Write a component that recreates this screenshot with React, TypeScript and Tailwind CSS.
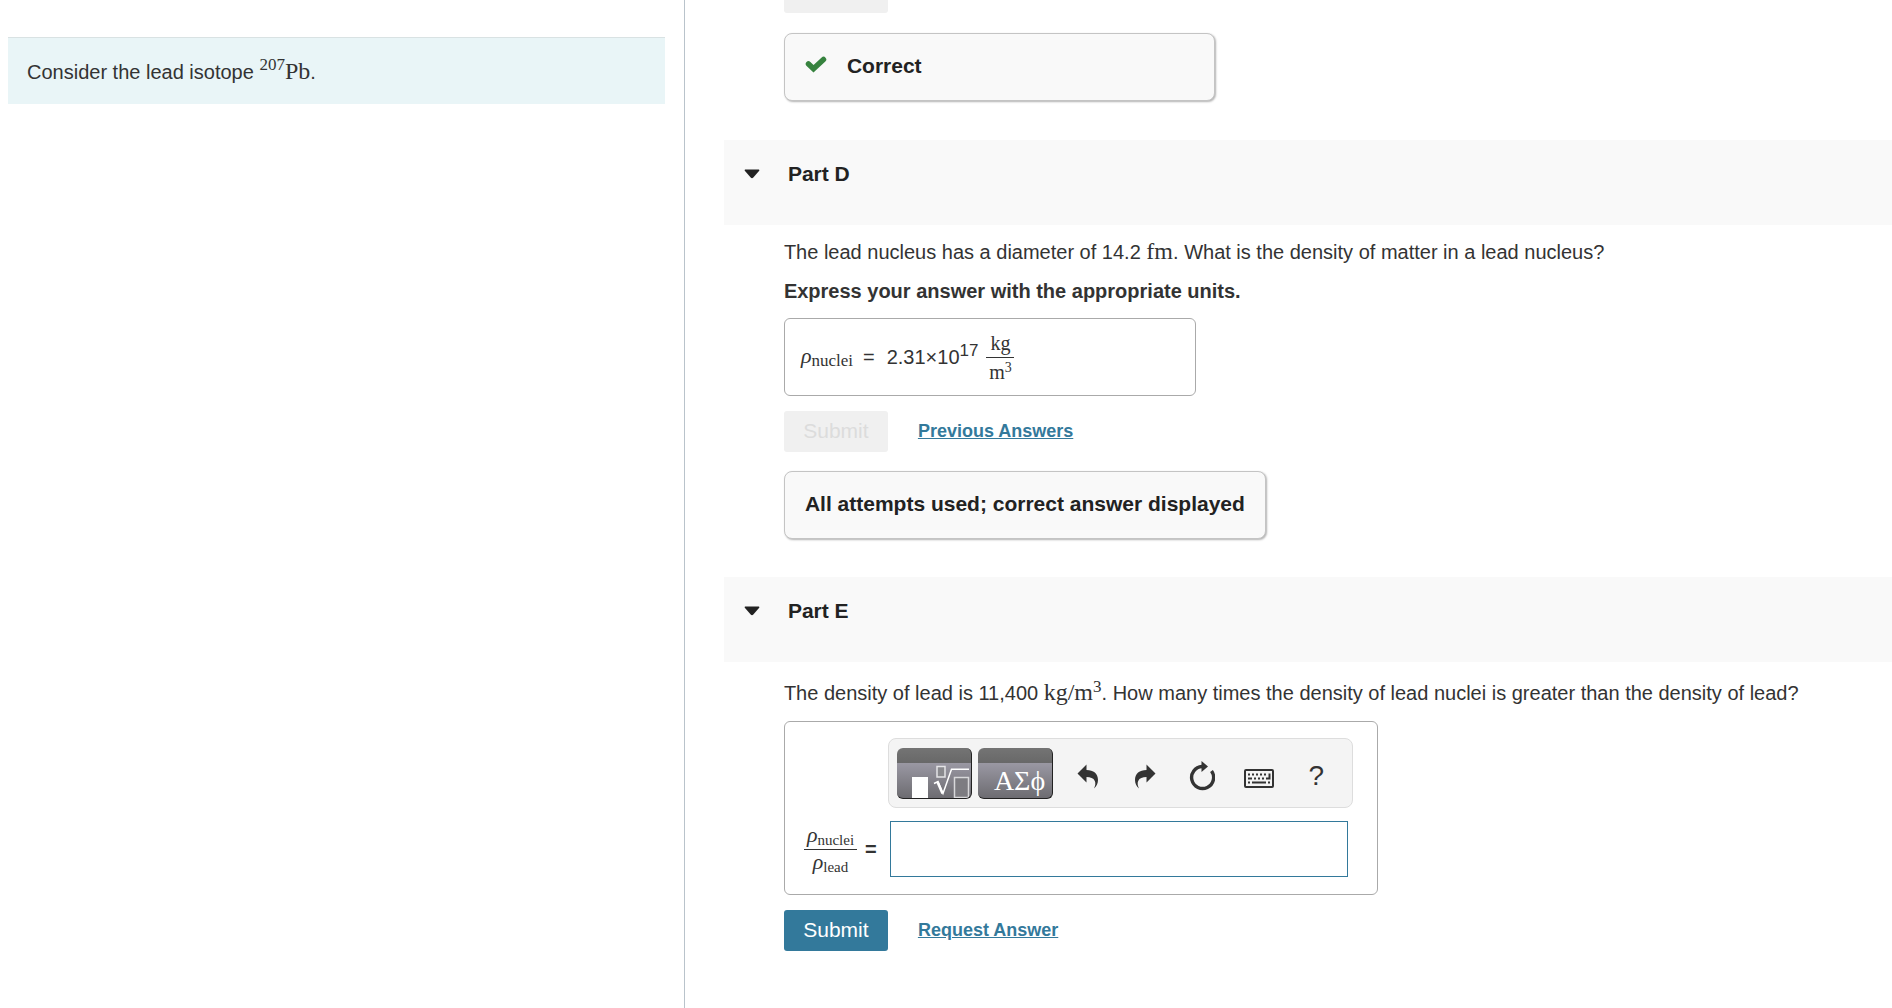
import type { ReactNode } from 'react';

const SERIF = "font-['Liberation_Serif',serif]";

function PartHeader({ title }: { title: string }) {
  return (
    <h2 className="bg-[#f9f9f9] pt-5 pb-[37px] pl-5 text-[21px] leading-7 font-bold text-[#222]">
      <button type="button" aria-expanded="true" className="flex items-center gap-7">
        <svg width="16" height="10" viewBox="0 0 16 10" fill="#222" aria-hidden="true">
          <path d="M1.200 .5h13.600q1 .3.400 1.200L9.300 8.600q-1.300 1.200-2.600 0L.8 1.700q-.6-.9.4-1.200z" />
        </svg>
        {title}
      </button>
    </h2>
  );
}

function Feedback({ children, className }: { children: ReactNode; className: string }) {
  return (
    <div
      className={`${className} flex max-w-full items-start rounded-lg border border-[#c4c4c4] bg-[#f9f9f9] pt-[18px] pb-5 pl-5 text-[21px] leading-7 font-bold text-[#222] shadow-[1px_1px_2px_rgba(0,0,0,0.3)]`}
    >
      {children}
    </div>
  );
}

function SubmitButton({ disabled = false }: { disabled?: boolean }) {
  return (
    <button
      type="button"
      disabled={disabled}
      className="h-[41px] w-[104px] rounded-[3px] bg-[#33799b] pb-[2px] text-[21px] leading-7 text-white disabled:bg-[#f0f0f0] disabled:text-[#dcdcdc]"
    >
      Submit
    </button>
  );
}

function AnswerLink({ children }: { children: ReactNode }) {
  return (
    <a href="#" className="pb-[2px] text-[18px] leading-6 font-bold text-[#33799b] underline">
      {children}
    </a>
  );
}

function Rho({ sub, className }: { sub: string; className: string }) {
  return (
    <span className={`${SERIF} whitespace-nowrap`}>
      <i className="text-[22px]">ρ</i>
      <span className={`${className} relative top-[3px]`}>{sub}</span>
    </span>
  );
}

function ToolButton({ label, children }: { label: string; children: ReactNode }) {
  return (
    <button type="button" aria-label={label} className="flex h-[51px] w-[57px] items-center justify-center pt-[6px] pl-[2px] text-[#333]">
      {children}
    </button>
  );
}

function TemplatesIcon() {
  return (
    <svg width="75" height="51" viewBox="0 0 75 51" fill="none" aria-hidden="true">
      <rect x="15" y="29" width="16" height="21" fill="#fff" />
      <rect x="40" y="18.500" width="8" height="10.500" fill="#8a8a8e" stroke="#e4e4e6" strokeWidth="1.500" />
      <rect x="57.500" y="29.500" width="14" height="20" fill="#7d7c81" stroke="#d8d8da" strokeWidth="1.500" />
      <path d="M37 35.500l4-2 5 12 8.500-24.300H72" stroke="#fff" strokeWidth="1.500" />
      <path d="M40.500 34l5 11.500" stroke="#fff" strokeWidth="2.500" />
    </svg>
  );
}

function ArrowIcon({ flipped = false }: { flipped?: boolean }) {
  return (
    <svg width="22" height="25" viewBox="0 0 22 25" fill="currentColor" className={flipped ? '-scale-x-100' : ''} aria-hidden="true">
      <path d="M.5 9.500L9.500.5v5.500c7 0 11.500 3.500 11.500 10 0 3.500-1.500 6.500-4 8.500 1.500-3 1.700-5.500.8-7.500-1.300-3-4.300-4-8.300-4v5.500z" />
    </svg>
  );
}

function ResetIcon() {
  return (
    <svg width="26" height="30" viewBox="0 0 26 30" aria-hidden="true">
      <path d="M14 5.500h-1A11 11 0 1 0 22.500 10" fill="none" stroke="currentColor" strokeWidth="3.400" />
      <path d="M12.500 0L19 5.500 12.500 11z" fill="currentColor" />
    </svg>
  );
}

function KeyboardIcon() {
  return (
    <svg width="30" height="19" viewBox="0 0 30 19" fill="none" stroke="currentColor" className="mt-1" aria-hidden="true">
      <rect x="1" y="1" width="28" height="17" rx="1" strokeWidth="2" />
      <path d="M4 5.500h20M4 13.500h2.500M24 13.500h2.500" strokeWidth="2" strokeDasharray="2 2" />
      <path d="M4 9.500h4M10 9.500h2M14 9.500h2M18 9.500h2M22 9.500h4M25.500 4.500v6M8 13.500h14" strokeWidth="2" />
    </svg>
  );
}

const keyClass =
  'h-[51px] w-[75px] overflow-hidden rounded-md border-r border-b border-[#222] bg-[linear-gradient(#747474,#686868_15px,#9a98a3_15px,#6d6c71)]';

function MathToolbar() {
  return (
    <div className="col-start-2 flex h-[70px] items-center rounded-lg border border-[#ddd] bg-[#f4f4f4] px-2">
      <button type="button" aria-label="Templates" className={keyClass}>
        <TemplatesIcon />
      </button>
      <button type="button" aria-label="Symbols" className={`${keyClass} ${SERIF} mx-[6px] pt-4 pl-4 text-left text-[28px] leading-8 text-white`}>
        ΑΣϕ
      </button>
      <ToolButton label="Undo"><ArrowIcon /></ToolButton>
      <ToolButton label="Redo"><ArrowIcon flipped /></ToolButton>
      <ToolButton label="Reset"><ResetIcon /></ToolButton>
      <ToolButton label="Keyboard shortcuts"><KeyboardIcon /></ToolButton>
      <ToolButton label="Help"><span className="text-[28px] leading-8">?</span></ToolButton>
    </div>
  );
}

export default function App() {
  return (
    <div className="grid h-screen grid-cols-[36.2%_1fr] overflow-hidden bg-white font-['Liberation_Sans',Arial,sans-serif] text-[20px] leading-7 text-[#333]">
      <aside className="border-r border-[#b9c3cb] pt-[37px] pr-[19px] pl-2">
        <p className="flex h-[67px] items-center border-t border-[#d9e2e3] bg-[#e9f5f7] pl-[19px]">
          <span>
            Consider the lead isotope{' '}
            <span className={`${SERIF} text-[24px]`}>
              <sup className="text-[17px]">207</sup>Pb
            </span>
            .
          </span>
        </p>
      </aside>

      <main className="-mt-7 pl-[39px]">
        <section className="pl-[60px]">
          <SubmitButton disabled />
          <Feedback className="mt-5 w-[431px]">
            <svg width="22" height="17" viewBox="0 0 22 17" fill="none" className="mt-1 mr-5" aria-hidden="true">
              <path d="M3.500 8l5 4.700L18.500 3.500" stroke="#37833f" strokeWidth="5.500" strokeLinecap="round" />
            </svg>
            Correct
          </Feedback>
        </section>

        <section className="mt-[39px]">
          <PartHeader title="Part D" />
          <div className="pt-[10px] pl-[60px]">
            <p className="leading-8">
              The lead nucleus has a diameter of 14.2 <span className={`${SERIF} text-[24px]`}>fm</span>. What is the
              density of matter in a lead nucleus?
            </p>
            <p className="mt-[9px] font-bold">Express your answer with the appropriate units.</p>
            <div className="mt-[13px] flex h-[78px] w-[412px] max-w-full items-center rounded-md border border-[#aaa] pl-4">
              <Rho sub="nuclei" className="text-[17px]" />
              <span className="mr-3 ml-[10px]">=</span>
              <span>
                2.31×10<sup className="text-[17px]">17</sup>
              </span>
              <span className={`${SERIF} ml-2 flex flex-col text-center text-[20px] leading-7`}>
                <span className="border-b border-[#333] px-1">kg</span>
                <span>
                  m<sup className="text-[14px]">3</sup>
                </span>
              </span>
            </div>
            <div className="mt-[15px] flex items-center gap-[30px]">
              <SubmitButton disabled />
              <AnswerLink>Previous Answers</AnswerLink>
            </div>
            <Feedback className="mt-[19px] w-[482px]">All attempts used; correct answer displayed</Feedback>
          </div>
        </section>

        <section className="mt-[38px]">
          <PartHeader title="Part E" />
          <div className="pt-[14px] pl-[60px]">
            <p className="leading-8">
              The density of lead is 11,400{' '}
              <span className={`${SERIF} text-[24px]`}>
                kg/m<sup className="text-[17px]">3</sup>
              </span>
              . How many times the density of lead nuclei is greater than the density of lead?
            </p>
            <div className="mt-3 grid w-[594px] max-w-full grid-cols-[103px_1fr] items-center gap-y-[13px] rounded-md border border-[#aaa] pt-4 pr-6 pb-[17px]">
              <MathToolbar />
              <label htmlFor="ratio" className="flex items-center gap-2 pl-[19px]">
                <span className="flex flex-col text-center">
                  <span className="border-b border-[#333] px-[3px] leading-6">
                    <Rho sub="nuclei" className="text-[15px]" />
                  </span>
                  <span className="leading-6">
                    <Rho sub="lead" className="text-[15px]" />
                  </span>
                </span>
                <b>=</b>
              </label>
              <input id="ratio" type="text" className="mr-[5px] ml-[2px] h-14 border border-[#33799b] px-2 outline-none" />
            </div>
            <div className="mt-[15px] flex items-center gap-[30px]">
              <SubmitButton />
              <AnswerLink>Request Answer</AnswerLink>
            </div>
          </div>
        </section>
      </main>
    </div>
  );
}
